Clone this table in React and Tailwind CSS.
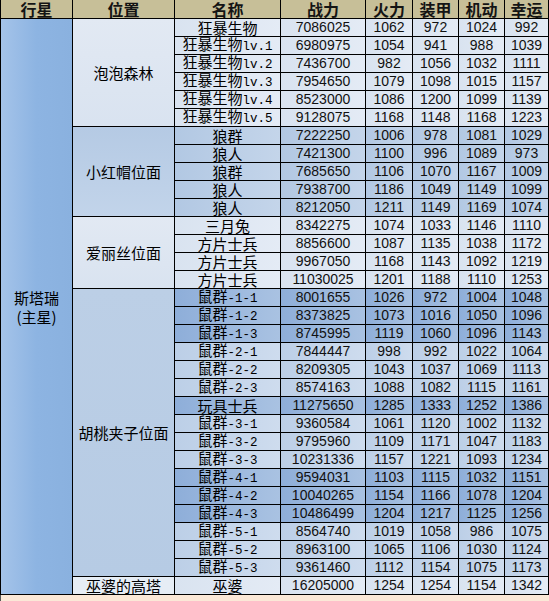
const groups = [
  {
    place: '泡泡森林',
    placeBg: 'bg-linear-to-b from-[#e2e9f3] to-[#d9e3f0]',
    rows: [
      ['狂暴生物', '7086025', '1062', '972', '1024', '992', 'pale'],
      ['狂暴生物lv.1', '6980975', '1054', '941', '988', '1039', 'pale'],
      ['狂暴生物lv.2', '7436700', '982', '1056', '1032', '1111', 'pale'],
      ['狂暴生物lv.3', '7954650', '1079', '1098', '1015', '1157', 'pale'],
      ['狂暴生物lv.4', '8523000', '1086', '1200', '1099', '1139', 'pale'],
      ['狂暴生物lv.5', '9128075', '1168', '1148', '1168', '1223', 'pale'],
    ],
  },
  {
    place: '小红帽位面',
    placeBg: 'bg-linear-to-b from-[#b5cae4] to-[#c2d4ea]',
    rows: [
      ['狼群', '7222250', '1006', '978', '1081', '1029', 'mid'],
      ['狼人', '7421300', '1100', '996', '1089', '973', 'mid'],
      ['狼群', '7685650', '1106', '1070', '1167', '1009', 'mid'],
      ['狼人', '7938700', '1186', '1049', '1149', '1099', 'mid'],
      ['狼人', '8212050', '1211', '1149', '1169', '1074', 'mid'],
    ],
  },
  {
    place: '爱丽丝位面',
    placeBg: 'bg-linear-to-b from-[#e2e9f3] to-[#d9e3f0]',
    rows: [
      ['三月兔', '8342275', '1074', '1033', '1146', '1110', 'pale'],
      ['方片士兵', '8856600', '1087', '1135', '1038', '1172', 'pale'],
      ['方片士兵', '9967050', '1168', '1143', '1092', '1219', 'pale'],
      ['方片士兵', '11030025', '1201', '1188', '1110', '1253', 'pale'],
    ],
  },
  {
    place: '胡桃夹子位面',
    placeBg: 'bg-linear-to-b from-[#bccfe6] to-[#b6cbe4]',
    rows: [
      ['鼠群-1-1', '8001655', '1026', '972', '1004', '1048', 'dark'],
      ['鼠群-1-2', '8373825', '1073', '1016', '1050', '1096', 'dark'],
      ['鼠群-1-3', '8745995', '1119', '1060', '1096', '1143', 'dark'],
      ['鼠群-2-1', '7844447', '998', '992', '1022', '1064', 'light'],
      ['鼠群-2-2', '8209305', '1043', '1037', '1069', '1113', 'light'],
      ['鼠群-2-3', '8574163', '1088', '1082', '1115', '1161', 'light'],
      ['玩具士兵', '11275650', '1285', '1333', '1252', '1386', 'dark'],
      ['鼠群-3-1', '9360584', '1061', '1120', '1002', '1132', 'light'],
      ['鼠群-3-2', '9795960', '1109', '1171', '1047', '1183', 'light'],
      ['鼠群-3-3', '10231336', '1157', '1221', '1093', '1234', 'light'],
      ['鼠群-4-1', '9594031', '1103', '1115', '1032', '1151', 'dark'],
      ['鼠群-4-2', '10040265', '1154', '1166', '1078', '1204', 'dark'],
      ['鼠群-4-3', '10486499', '1204', '1217', '1125', '1256', 'dark'],
      ['鼠群-5-1', '8564740', '1019', '1058', '986', '1075', 'light'],
      ['鼠群-5-2', '8963100', '1065', '1106', '1030', '1124', 'light'],
      ['鼠群-5-3', '9361460', '1112', '1154', '1075', '1173', 'light'],
    ],
  },
  {
    place: '巫婆的高塔',
    placeBg: 'bg-[#e6edf5]',
    rows: [['巫婆', '16205000', '1254', '1254', '1154', '1342', 'pale']],
  },
]

const spans = {
  1: 'row-span-1',
  4: 'row-span-4',
  5: 'row-span-5',
  6: 'row-span-6',
  16: 'row-span-16',
}

const tones = {
  pale: 'bg-linear-to-r from-[#d9e3f0] to-[#e4ebf5]',
  mid: 'bg-linear-to-r from-[#b2c8e3] to-[#c4d5ea]',
  dark: 'bg-linear-to-r from-[#8eaed9] to-[#a9c2e2]',
  light: 'bg-linear-to-r from-[#bccfe7] to-[#cedcee]',
}

const headers = ['行星', '位置', '名称', '战力', '火力', '装甲', '机动', '幸运']

const cjk = "font-['Noto_Sans_CJK_SC',sans-serif]"
const num = "font-['Liberation_Sans','Noto_Sans_CJK_SC',sans-serif]"

// chinese part in the CJK face, the ascii tail (lv.1, -1-1) in a half-width mono face
function Name({ text }) {
  const parts = text.split(/([\x20-\x7e]+)/).filter(Boolean)
  return (
    <span className="whitespace-nowrap">
      {parts.map((p, i) =>
        /^[\x20-\x7e]+$/.test(p) ? (
          <span key={i} className="font-['Liberation_Mono',monospace] text-[12.5px]">
            {p}
          </span>
        ) : (
          <span key={i}>{p}</span>
        )
      )}
    </span>
  )
}

export default function App() {
  return (
    <div className="w-[549px] h-[601px] overflow-hidden bg-[#fbe8d7]">
      <div className="grid grid-cols-[71px_101px_105px_84px_46px_45px_45px_43px] grid-rows-[18px_repeat(32,17px)] gap-px bg-black px-px pb-px">
        {headers.map((h) => (
          <div
            key={h}
            className={`flex items-center justify-center bg-[#c7bf98] text-[16px] leading-[18px] font-bold text-[#141414] ${cjk}`}
          >
            {h}
          </div>
        ))}

        {/* planet column */}
        <div
          className={`row-span-32 flex flex-col items-center justify-center bg-linear-to-r from-[#a4c3e9] via-[#8db4e2] to-[#8ab1df] text-[15px] leading-[19px] text-black ${cjk}`}
        >
          <span>斯塔瑞</span>
          <span>(主星)</span>
        </div>

        {groups.map((g) =>
          g.rows.map((r, i) => [
            i === 0 && (
              <div
                key={g.place}
                className={`${spans[g.rows.length]} ${g.placeBg} flex items-center justify-center text-[15px] leading-[17px] text-black ${cjk}`}
              >
                {g.place}
              </div>
            ),
            <div
              key={g.place + i + 'n'}
              className={`${tones[r[6]]} flex items-center justify-center overflow-hidden text-[15px] leading-[17px] text-black ${cjk}`}
            >
              <Name text={r[0]} />
            </div>,
            ...r.slice(1, 6).map((v, j) => (
              <div
                key={g.place + i + 'v' + j}
                className={`${tones[r[6]]} flex items-center justify-center text-[14px] leading-[17px] text-[#111] ${num}`}
              >
                {v}
              </div>
            )),
          ])
        )}
      </div>
      <div className="h-[6px] border-l border-[#555] bg-[#fbe8d7]" />
    </div>
  )
}
